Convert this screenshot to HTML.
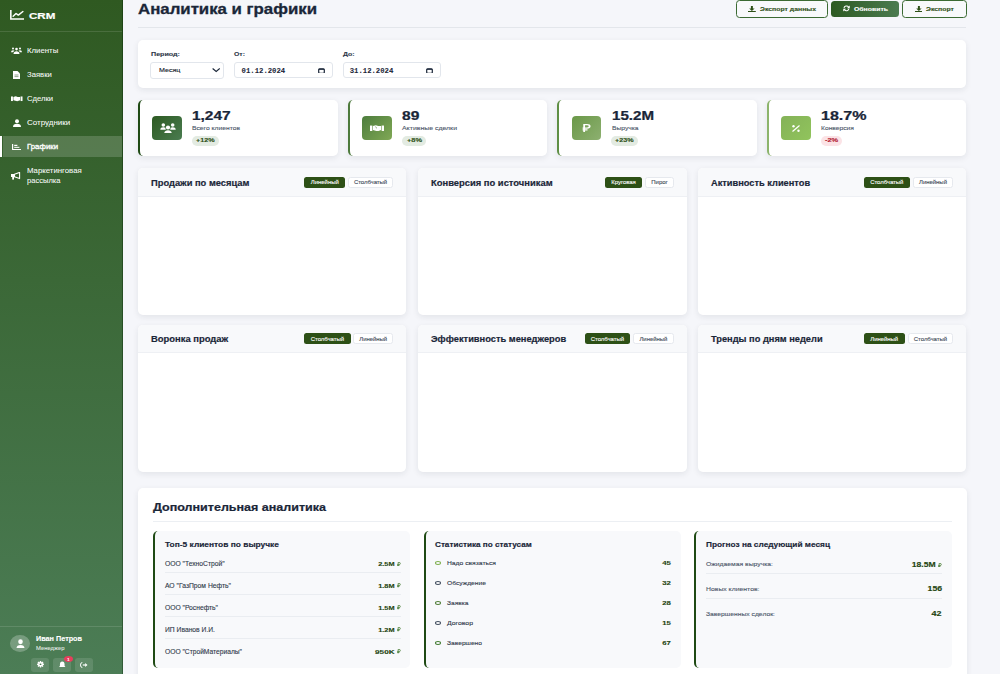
<!DOCTYPE html><html><head><meta charset="utf-8"><title>CRM - Аналитика и графики</title><style>
html,body{margin:0;padding:0;width:1000px;height:674px;overflow:hidden;background:#f5f6fa;}
.t{position:absolute;line-height:1;white-space:nowrap;}
.b{position:absolute;box-sizing:border-box;}
</style></head><body>
<div class="b" style="left:0.00px;top:0.00px;width:123.00px;height:674.00px;background:linear-gradient(180deg,rgb(47,89,33) 0%,rgb(76,125,86) 100%);"></div>
<div class="b" style="left:122.00px;top:0.00px;width:1.00px;height:674.00px;background:rgba(0,30,0,.35);"></div>
<svg class="b" style="left:9.60px;top:10.40px;width:14.60px;height:9.80px;" viewBox="0 0 14 10" preserveAspectRatio="none"><path d="M0.8 0 V9.2 H13.8" fill="none" stroke="#fff" stroke-width="1.5" stroke-linecap="round"/><path d="M3 6.3 L5.8 3.6 L8 5.2 L12.4 1.6" fill="none" stroke="#fff" stroke-width="1.4" stroke-linecap="round" stroke-linejoin="round"/></svg>
<div class="t" id="t0" style="left:28.80px;top:11.09px;font-size:9.70px;font-weight:700;color:#fff;letter-spacing:0.00px;font-family:'Liberation Sans', sans-serif;-webkit-text-stroke:0.19px #fff;transform:scaleX(1.1966);transform-origin:0 0;">CRM</div>
<div class="b" style="left:0.00px;top:31.00px;width:122.00px;height:1.00px;background:rgba(255,255,255,.12);"></div>
<div class="b" style="left:3.00px;top:135.80px;width:119.00px;height:21.70px;background:rgba(255,255,255,.17);"></div>
<div class="b" style="left:0.00px;top:135.80px;width:1.80px;height:21.70px;background:#fff;"></div>
<div class="t" id="t1" style="left:27.10px;top:47.61px;font-size:6.90px;font-weight:400;color:rgba(255,255,255,.95);letter-spacing:0.00px;font-family:'Liberation Sans', sans-serif;-webkit-text-stroke:0.10px rgba(255,255,255,.95);transform:scaleX(1.1306);transform-origin:0 0;">Клиенты</div>
<div class="t" id="t2" style="left:27.10px;top:71.86px;font-size:6.90px;font-weight:400;color:rgba(255,255,255,.95);letter-spacing:0.00px;font-family:'Liberation Sans', sans-serif;-webkit-text-stroke:0.10px rgba(255,255,255,.95);transform:scaleX(1.1146);transform-origin:0 0;">Заявки</div>
<div class="t" id="t3" style="left:27.10px;top:96.16px;font-size:6.90px;font-weight:400;color:rgba(255,255,255,.95);letter-spacing:0.00px;font-family:'Liberation Sans', sans-serif;-webkit-text-stroke:0.10px rgba(255,255,255,.95);transform:scaleX(1.1114);transform-origin:0 0;">Сделки</div>
<div class="t" id="t4" style="left:27.10px;top:120.36px;font-size:6.90px;font-weight:400;color:rgba(255,255,255,.95);letter-spacing:0.00px;font-family:'Liberation Sans', sans-serif;-webkit-text-stroke:0.10px rgba(255,255,255,.95);transform:scaleX(1.1600);transform-origin:0 0;">Сотрудники</div>
<div class="t" id="t5" style="left:27.10px;top:144.36px;font-size:6.90px;font-weight:400;color:#fff;letter-spacing:0.00px;font-family:'Liberation Sans', sans-serif;-webkit-text-stroke:0.30px #fff;transform:scaleX(1.1318);transform-origin:0 0;">Графики</div>
<div class="t" id="t6" style="left:27.10px;top:168.06px;font-size:6.90px;font-weight:400;color:rgba(255,255,255,.95);letter-spacing:0.00px;font-family:'Liberation Sans', sans-serif;-webkit-text-stroke:0.10px rgba(255,255,255,.95);transform:scaleX(1.1315);transform-origin:0 0;">Маркетинговая</div>
<div class="t" id="t7" style="left:27.10px;top:178.06px;font-size:6.90px;font-weight:400;color:rgba(255,255,255,.95);letter-spacing:0.00px;font-family:'Liberation Sans', sans-serif;-webkit-text-stroke:0.10px rgba(255,255,255,.95);transform:scaleX(1.0972);transform-origin:0 0;">рассылка</div>
<svg class="b" style="left:11.00px;top:47.00px;width:11.00px;height:7.20px;" viewBox="0 0 22 14" preserveAspectRatio="none"><circle cx="11" cy="4" r="2.6" fill="#fff"/><circle cx="4" cy="3" r="2" fill="#fff"/><circle cx="18" cy="3" r="2" fill="#fff"/><path d="M5 14 Q5 8.5 11 8.5 Q17 8.5 17 14Z" fill="#fff"/><path d="M0 10 Q0 6.5 4 6.5 Q6 6.5 7 7.5 Q4.5 9 4.3 10Z" fill="#fff"/><path d="M22 10 Q22 6.5 18 6.5 Q16 6.5 15 7.5 Q17.5 9 17.7 10Z" fill="#fff"/></svg>
<svg class="b" style="left:12.50px;top:71.00px;width:7.00px;height:8.00px;" viewBox="0 0 7 8" preserveAspectRatio="none"><path d="M0 0 H4.5 L7 2.5 V8 H0Z" fill="#fff"/><path d="M1.5 4 H5.5 M1.5 5.6 H5.5" stroke="#4a6a40" stroke-width=".6"/></svg>
<svg class="b" style="left:11.00px;top:96.00px;width:11.50px;height:5.50px;" viewBox="0 0 12 6" preserveAspectRatio="none"><rect x="0" y="0.5" width="2" height="5" fill="#fff"/><rect x="10" y="0.5" width="2" height="5" fill="#fff"/><path d="M2.5 1 L5 0.3 L7 1 L9.5 1 V4.5 L6.5 5.8 L2.5 4.5Z" fill="#fff"/></svg>
<svg class="b" style="left:12.50px;top:119.00px;width:8.00px;height:8.00px;" viewBox="0 0 8 8" preserveAspectRatio="none"><circle cx="4" cy="2.2" r="2" fill="#fff"/><path d="M0 8 Q0 4.8 4 4.8 Q8 4.8 8 8Z" fill="#fff"/></svg>
<svg class="b" style="left:11.60px;top:143.80px;width:9.30px;height:6.20px;" viewBox="0 0 9.3 6.2" preserveAspectRatio="none"><path d="M0.6 0 V5.5 Q0.6 5.6 0.8 5.6 H9.3" fill="none" stroke="#fff" stroke-width="1.2"/><rect x="2.2" y="0.8" width="3.2" height="1.2" fill="#fff"/><rect x="2.2" y="2.8" width="5.2" height="1.2" fill="#fff" opacity=".85"/></svg>
<svg class="b" style="left:11.40px;top:172.20px;width:9.30px;height:7.60px;" viewBox="0 0 9.3 7.6" preserveAspectRatio="none"><rect x="0" y="2" width="3.4" height="3" fill="#fff"/><rect x="1.2" y="4.6" width="1.8" height="3" fill="#fff"/><path d="M3.4 2.2 L8.6 0.4 V6.6 L3.4 4.8Z" fill="none" stroke="#fff" stroke-width="1.1" stroke-linejoin="round"/></svg>
<div class="b" style="left:0.00px;top:626.00px;width:122.00px;height:1.00px;background:rgba(255,255,255,.12);"></div>
<div class="b" style="left:10.00px;top:635.00px;width:20.00px;height:16.50px;border-radius:50%;background:rgba(255,255,255,.25);"></div>
<svg class="b" style="left:15.50px;top:638.50px;width:9.00px;height:9.50px;" viewBox="0 0 9 9" preserveAspectRatio="none"><circle cx="4.5" cy="2.6" r="2.3" fill="#fff"/><path d="M0.5 9 Q0.5 5.6 4.5 5.6 Q8.5 5.6 8.5 9Z" fill="#fff"/></svg>
<div class="t" id="t8" style="left:35.50px;top:635.60px;font-size:6.50px;font-weight:700;color:#fff;letter-spacing:0.00px;font-family:'Liberation Sans', sans-serif;-webkit-text-stroke:0.13px #fff;transform:scaleX(1.1147);transform-origin:0 0;">Иван Петров</div>
<div class="t" id="t9" style="left:35.50px;top:645.88px;font-size:5.10px;font-weight:400;color:rgba(255,255,255,.8);letter-spacing:0.00px;font-family:'Liberation Sans', sans-serif;-webkit-text-stroke:0.10px rgba(255,255,255,.8);transform:scaleX(1.1530);transform-origin:0 0;">Менеджер</div>
<div class="b" style="left:31.00px;top:658.00px;width:17.50px;height:13.50px;border-radius:3px;background:rgba(255,255,255,.12);"></div>
<div class="b" style="left:53.00px;top:658.00px;width:17.50px;height:13.50px;border-radius:3px;background:rgba(255,255,255,.12);"></div>
<div class="b" style="left:75.00px;top:658.00px;width:17.50px;height:13.50px;border-radius:3px;background:rgba(255,255,255,.12);"></div>
<svg class="b" style="left:36.60px;top:661.30px;width:7.00px;height:6.50px;" viewBox="0 0 12 12" preserveAspectRatio="none"><g fill="#fff"><circle cx="6" cy="6" r="4.2"/><rect x="4.8" y="0" width="2.4" height="12"/><rect x="0" y="4.8" width="12" height="2.4"/><rect x="4.8" y="0" width="2.4" height="12" transform="rotate(45 6 6)"/><rect x="4.8" y="0" width="2.4" height="12" transform="rotate(-45 6 6)"/></g><circle cx="6" cy="6" r="1.6" fill="#4f7d55"/></svg>
<svg class="b" style="left:59.00px;top:661.00px;width:6.50px;height:7.00px;" viewBox="0 0 7 7" preserveAspectRatio="none"><path d="M3.5 0.5 Q6 0.5 6 3.5 V5 L7 6 H0 L1 5 V3.5 Q1 0.5 3.5 0.5Z" fill="#fff"/></svg>
<div class="b" style="left:64.00px;top:656.00px;width:9.00px;height:6.00px;border-radius:50%;background:#e63e5c;"></div>
<div class="t" id="t10" style="left:67.30px;top:657.61px;font-size:4.00px;font-weight:700;color:#fff;letter-spacing:0.00px;font-family:'Liberation Sans', sans-serif;-webkit-text-stroke:0.08px #fff;">1</div>
<svg class="b" style="left:80.00px;top:661.50px;width:7.50px;height:6.00px;" viewBox="0 0 8 6" preserveAspectRatio="none"><path d="M2.5 0.5 Q0.5 0.5 0.5 3 Q0.5 5.5 2.5 5.5" fill="none" stroke="#fff" stroke-width="1"/><path d="M3 3 H6" stroke="#fff" stroke-width="1.2"/><path d="M5.5 1 L8 3 L5.5 5Z" fill="#fff"/></svg>
<div class="t" id="t11" style="left:138.20px;top:2.92px;font-size:13.80px;font-weight:700;color:#1a2638;letter-spacing:0.00px;font-family:'Liberation Sans', sans-serif;-webkit-text-stroke:0.28px #1a2638;transform:scaleX(1.2178);transform-origin:0 0;">Аналитика и графики</div>
<div class="b" style="left:735.80px;top:0.30px;width:92.60px;height:17.30px;border:1.3px solid #3b6a33;border-radius:3.5px;background:#f8f9fb;"></div>
<div class="b" style="left:830.80px;top:1.10px;width:68.70px;height:15.80px;border-radius:3.5px;background:linear-gradient(90deg,#2d5a22,#4b7b50);"></div>
<div class="b" style="left:901.70px;top:0.30px;width:65.30px;height:17.30px;border:1.3px solid #3b6a33;border-radius:3.5px;background:#f8f9fb;"></div>
<svg class="b" style="left:748.00px;top:5.80px;width:7.80px;height:6.40px;" viewBox="0 0 8 6.4" preserveAspectRatio="none"><path d="M3 0 H5 V2.5 H6.8 L4 5 L1.2 2.5 H3Z" fill="#2d5016"/><rect x="0" y="5" width="8" height="1.4" fill="#2d5016"/></svg>
<div class="t" id="t12" style="left:760.10px;top:6.04px;font-size:6.10px;font-weight:700;color:#2d5016;letter-spacing:0.00px;font-family:'Liberation Sans', sans-serif;-webkit-text-stroke:0.12px #2d5016;transform:scaleX(1.1281);transform-origin:0 0;">Экспорт данных</div>
<svg class="b" style="left:842.60px;top:5.20px;width:7.00px;height:6.80px;" viewBox="0 0 10 10" preserveAspectRatio="none"><path d="M1.4 4.6 A3.7 3.7 0 0 1 8.0 3.0" fill="none" stroke="#fff" stroke-width="1.5"/><path d="M9.6 0.6 V4.6 H5.6Z" fill="#fff"/><path d="M8.6 5.4 A3.7 3.7 0 0 1 2.0 7.0" fill="none" stroke="#fff" stroke-width="1.5"/><path d="M0.4 9.4 V5.4 H4.4Z" fill="#fff"/></svg>
<div class="t" id="t13" style="left:854.30px;top:5.94px;font-size:6.10px;font-weight:700;color:#fff;letter-spacing:0.00px;font-family:'Liberation Sans', sans-serif;-webkit-text-stroke:0.12px #fff;transform:scaleX(1.1280);transform-origin:0 0;">Обновить</div>
<svg class="b" style="left:914.50px;top:5.80px;width:7.80px;height:6.40px;" viewBox="0 0 8 6.4" preserveAspectRatio="none"><path d="M3 0 H5 V2.5 H6.8 L4 5 L1.2 2.5 H3Z" fill="#2d5016"/><rect x="0" y="5" width="8" height="1.4" fill="#2d5016"/></svg>
<div class="t" id="t14" style="left:926.30px;top:6.04px;font-size:6.10px;font-weight:700;color:#2d5016;letter-spacing:0.00px;font-family:'Liberation Sans', sans-serif;-webkit-text-stroke:0.12px #2d5016;transform:scaleX(1.1320);transform-origin:0 0;">Экспорт</div>
<div class="b" style="left:138.00px;top:27.00px;width:828.00px;height:1.00px;background:#e3e6eb;"></div>
<div class="b" style="left:138.00px;top:39.80px;width:828.40px;height:48.60px;background:#fff;border-radius:5px;box-shadow:0 2px 6px rgba(20,30,50,.085);"></div>
<div class="t" id="t15" style="left:150.60px;top:51.44px;font-size:6.10px;font-weight:700;color:#2d3748;letter-spacing:0.00px;font-family:'Liberation Sans', sans-serif;-webkit-text-stroke:0.12px #2d3748;transform:scaleX(1.1702);transform-origin:0 0;">Период:</div>
<div class="t" id="t16" style="left:234.20px;top:51.44px;font-size:6.10px;font-weight:700;color:#2d3748;letter-spacing:0.00px;font-family:'Liberation Sans', sans-serif;-webkit-text-stroke:0.12px #2d3748;transform:scaleX(1.1264);transform-origin:0 0;">От:</div>
<div class="t" id="t17" style="left:343.00px;top:51.44px;font-size:6.10px;font-weight:700;color:#2d3748;letter-spacing:0.00px;font-family:'Liberation Sans', sans-serif;-webkit-text-stroke:0.12px #2d3748;transform:scaleX(1.1306);transform-origin:0 0;">До:</div>
<div class="b" style="left:150.40px;top:62.00px;width:73.40px;height:16.50px;border:1px solid #e2e6ec;border-radius:3px;background:#fff;"></div>
<div class="t" id="t18" style="left:159.00px;top:67.32px;font-size:6.00px;font-weight:400;color:#111a28;letter-spacing:0.00px;font-family:'Liberation Sans', sans-serif;-webkit-text-stroke:0.12px #111a28;transform:scaleX(1.1827);transform-origin:0 0;">Месяц</div>
<svg class="b" style="left:211.80px;top:68.40px;width:8.40px;height:4.20px;" viewBox="0 0 8 4" preserveAspectRatio="none"><path d="M0.6 0.5 L4 3.4 L7.4 0.5" fill="none" stroke="#1a2638" stroke-width="1.1"/></svg>
<div class="b" style="left:234.20px;top:62.30px;width:98.40px;height:15.70px;border:1px solid #e2e6ec;border-radius:3px;background:#fff;"></div>
<div class="t" id="t19" style="left:241.60px;top:67.62px;font-size:7.28px;font-weight:700;color:#1a2638;letter-spacing:0.00px;font-family:'Liberation Mono', monospace;-webkit-text-stroke:0.05px #1a2638;">01.12.2024</div>
<svg class="b" style="left:318.00px;top:67.60px;width:7.00px;height:5.80px;" viewBox="0 0 7 6" preserveAspectRatio="none"><rect x="0.7" y="0.8" width="5.6" height="4.6" rx="1" fill="none" stroke="#1a2638" stroke-width="1.2"/><rect x="0.7" y="0.8" width="5.6" height="1.1" fill="#1a2638"/></svg>
<div class="b" style="left:343.00px;top:62.30px;width:97.70px;height:15.70px;border:1px solid #e2e6ec;border-radius:3px;background:#fff;"></div>
<div class="t" id="t20" style="left:349.70px;top:67.62px;font-size:7.28px;font-weight:700;color:#1a2638;letter-spacing:0.00px;font-family:'Liberation Mono', monospace;-webkit-text-stroke:0.05px #1a2638;">31.12.2024</div>
<svg class="b" style="left:426.10px;top:67.60px;width:7.00px;height:5.80px;" viewBox="0 0 7 6" preserveAspectRatio="none"><rect x="0.7" y="0.8" width="5.6" height="4.6" rx="1" fill="none" stroke="#1a2638" stroke-width="1.2"/><rect x="0.7" y="0.8" width="5.6" height="1.1" fill="#1a2638"/></svg>
<div class="b" style="left:138.00px;top:100.00px;width:199.50px;height:56.40px;background:#fff;border-radius:5px;border-left:2px solid #1f4a14;box-shadow:0 2px 6px rgba(20,30,50,.085);"></div>
<div class="b" style="left:152.40px;top:116.00px;width:29.40px;height:24.00px;border-radius:4px;background:linear-gradient(135deg,#2d5a22,#4a7c50);"></div>
<svg class="b" style="left:159.50px;top:122.50px;width:16.00px;height:10.90px;" viewBox="0 0 16 11" preserveAspectRatio="none"><g fill="#fff"><circle cx="3.3" cy="2" r="1.8"/><circle cx="12.7" cy="2" r="1.8"/><circle cx="8" cy="4.5" r="2.1"/><path d="M0.3 6.7 Q0.5 4.3 3.3 4.3 Q4.9 4.3 5.5 5.1 Q5.3 6 5.8 6.7Z"/><path d="M15.7 6.7 Q15.5 4.3 12.7 4.3 Q11.1 4.3 10.5 5.1 Q10.7 6 10.2 6.7Z"/><path d="M4.1 10.8 Q4.5 7.3 8 7.3 Q11.5 7.3 11.9 10.8Z"/></g></svg>
<div class="t" id="t21" style="left:192.40px;top:110.07px;font-size:12.20px;font-weight:700;color:#1a2638;letter-spacing:0.00px;font-family:'Liberation Sans', sans-serif;-webkit-text-stroke:0.24px #1a2638;transform:scaleX(1.2656);transform-origin:0 0;">1,247</div>
<div class="t" id="t22" style="left:192.40px;top:124.94px;font-size:6.10px;font-weight:400;color:#4a5568;letter-spacing:0.00px;font-family:'Liberation Sans', sans-serif;-webkit-text-stroke:0.10px #4a5568;transform:scaleX(1.1042);transform-origin:0 0;">Всего клиентов</div>
<div class="b" style="left:192.00px;top:135.80px;width:27.00px;height:10.20px;border-radius:5px;background:#e3ebe2;"></div>
<div class="t" id="t23" style="left:196.20px;top:138.46px;font-size:5.60px;font-weight:700;color:#2d5016;letter-spacing:0.00px;font-family:'Liberation Sans', sans-serif;-webkit-text-stroke:0.11px #2d5016;transform:scaleX(1.2855);transform-origin:0 0;">+12%</div>
<div class="b" style="left:348.00px;top:100.00px;width:198.70px;height:56.40px;background:#fff;border-radius:5px;border-left:2px solid #4d7a3c;box-shadow:0 2px 6px rgba(20,30,50,.085);"></div>
<div class="b" style="left:362.40px;top:116.00px;width:29.40px;height:24.00px;border-radius:4px;background:linear-gradient(135deg,#4d7d3d,#80a855);"></div>
<svg class="b" style="left:370.10px;top:124.70px;width:14.00px;height:6.60px;" viewBox="0 0 12 6" preserveAspectRatio="none"><rect x="0" y="0.5" width="2" height="5" fill="#fff"/><rect x="10" y="0.5" width="2" height="5" fill="#fff"/><path d="M2.5 1 L5 0.3 L7 1 L9.5 1 V4.5 L6.5 5.8 L2.5 4.5Z" fill="#fff"/><path d="M4.5 1.5 L6 3" stroke="#5a8a48" stroke-width=".6"/></svg>
<div class="t" id="t24" style="left:402.40px;top:110.07px;font-size:12.20px;font-weight:700;color:#1a2638;letter-spacing:0.00px;font-family:'Liberation Sans', sans-serif;-webkit-text-stroke:0.24px #1a2638;transform:scaleX(1.2756);transform-origin:0 0;">89</div>
<div class="t" id="t25" style="left:402.40px;top:124.94px;font-size:6.10px;font-weight:400;color:#4a5568;letter-spacing:0.00px;font-family:'Liberation Sans', sans-serif;-webkit-text-stroke:0.10px #4a5568;transform:scaleX(1.1344);transform-origin:0 0;">Активные сделки</div>
<div class="b" style="left:402.00px;top:135.80px;width:24.00px;height:10.20px;border-radius:5px;background:#e3ebe2;"></div>
<div class="t" id="t26" style="left:406.50px;top:138.46px;font-size:5.60px;font-weight:700;color:#2d5016;letter-spacing:0.00px;font-family:'Liberation Sans', sans-serif;-webkit-text-stroke:0.11px #2d5016;transform:scaleX(1.3205);transform-origin:0 0;">+8%</div>
<div class="b" style="left:557.20px;top:100.00px;width:199.50px;height:56.40px;background:#fff;border-radius:5px;border-left:2px solid #5f8f45;box-shadow:0 2px 6px rgba(20,30,50,.085);"></div>
<div class="b" style="left:571.60px;top:116.00px;width:29.40px;height:24.00px;border-radius:4px;background:linear-gradient(135deg,#6a9848,#8db070);"></div>
<svg class="b" style="left:582.30px;top:124.00px;width:8.40px;height:7.90px;" viewBox="0 0 7 10" preserveAspectRatio="none"><path d="M1.8 10 V0.8 H4.2 Q6.4 0.8 6.4 3 Q6.4 5.2 4.2 5.2 H0.5 M0.5 7.4 H4.6" fill="none" stroke="#fff" stroke-width="1.5"/></svg>
<div class="t" id="t27" style="left:611.60px;top:110.07px;font-size:12.20px;font-weight:700;color:#1a2638;letter-spacing:0.00px;font-family:'Liberation Sans', sans-serif;-webkit-text-stroke:0.24px #1a2638;transform:scaleX(1.2399);transform-origin:0 0;">15.2M</div>
<div class="t" id="t28" style="left:611.60px;top:124.94px;font-size:6.10px;font-weight:400;color:#4a5568;letter-spacing:0.00px;font-family:'Liberation Sans', sans-serif;-webkit-text-stroke:0.10px #4a5568;transform:scaleX(1.0956);transform-origin:0 0;">Выручка</div>
<div class="b" style="left:611.20px;top:135.80px;width:27.00px;height:10.20px;border-radius:5px;background:#e3ebe2;"></div>
<div class="t" id="t29" style="left:615.45px;top:138.46px;font-size:5.60px;font-weight:700;color:#2d5016;letter-spacing:0.00px;font-family:'Liberation Sans', sans-serif;-webkit-text-stroke:0.11px #2d5016;transform:scaleX(1.2786);transform-origin:0 0;">+23%</div>
<div class="b" style="left:766.80px;top:100.00px;width:199.40px;height:56.40px;background:#fff;border-radius:5px;border-left:2px solid #8cb46c;box-shadow:0 2px 6px rgba(20,30,50,.085);"></div>
<div class="b" style="left:781.20px;top:116.00px;width:29.40px;height:24.00px;border-radius:4px;background:linear-gradient(135deg,#84b258,#91c45c);"></div>
<svg class="b" style="left:791.90px;top:124.50px;width:8.00px;height:7.00px;" viewBox="0 0 8 7" preserveAspectRatio="none"><path d="M0.5 6.5 L7.5 0.5" stroke="#fff" stroke-width="1.2"/><circle cx="1.5" cy="1.3" r="1.2" fill="#fff"/><circle cx="6.5" cy="5.7" r="1.2" fill="#fff"/></svg>
<div class="t" id="t30" style="left:821.20px;top:110.07px;font-size:12.20px;font-weight:700;color:#1a2638;letter-spacing:0.00px;font-family:'Liberation Sans', sans-serif;-webkit-text-stroke:0.24px #1a2638;transform:scaleX(1.3165);transform-origin:0 0;">18.7%</div>
<div class="t" id="t31" style="left:821.20px;top:124.94px;font-size:6.10px;font-weight:400;color:#4a5568;letter-spacing:0.00px;font-family:'Liberation Sans', sans-serif;-webkit-text-stroke:0.10px #4a5568;transform:scaleX(1.0994);transform-origin:0 0;">Конверсия</div>
<div class="b" style="left:820.80px;top:135.80px;width:21.20px;height:10.20px;border-radius:5px;background:#fbe3e6;"></div>
<div class="t" id="t32" style="left:824.80px;top:138.46px;font-size:5.60px;font-weight:700;color:#b42335;letter-spacing:0.00px;font-family:'Liberation Sans', sans-serif;-webkit-text-stroke:0.11px #b42335;transform:scaleX(1.3262);transform-origin:0 0;">-2%</div>
<div class="b" style="left:138.00px;top:168.40px;width:268.00px;height:146.60px;background:#fff;border-radius:5px;overflow:hidden;box-shadow:0 2px 6px rgba(20,30,50,.085);"></div>
<div class="b" style="left:138.00px;top:168.40px;width:268.00px;height:28.20px;background:#f8f9fb;border-radius:5px 5px 0 0;border-bottom:1px solid #eef0f4;"></div>
<div class="t" id="t33" style="left:150.60px;top:178.53px;font-size:8.70px;font-weight:700;color:#1a2638;letter-spacing:0.00px;font-family:'Liberation Sans', sans-serif;-webkit-text-stroke:0.17px #1a2638;transform:scaleX(1.0727);transform-origin:0 0;">Продажи по месяцам</div>
<div class="b" style="left:348.00px;top:176.60px;width:45.00px;height:11.00px;border-radius:2.5px;background:#fff;border:0.8px solid #e6e9ee;"></div>
<div class="t" id="t34" style="left:370.50px;top:179.32px;font-size:6.00px;font-weight:400;color:#404a58;letter-spacing:-0.05px;font-family:'Liberation Sans', sans-serif;-webkit-text-stroke:0.10px #404a58;transform:translateX(-50%);">Столбчатый</div>
<div class="b" style="left:304.40px;top:176.60px;width:40.80px;height:11.00px;border-radius:2.5px;background:#2d5016;"></div>
<div class="t" id="t35" style="left:324.80px;top:179.32px;font-size:6.00px;font-weight:400;color:#fff;letter-spacing:-0.05px;font-family:'Liberation Sans', sans-serif;-webkit-text-stroke:0.10px #fff;transform:translateX(-50%);">Линейный</div>
<div class="b" style="left:418.00px;top:168.40px;width:268.80px;height:146.60px;background:#fff;border-radius:5px;overflow:hidden;box-shadow:0 2px 6px rgba(20,30,50,.085);"></div>
<div class="b" style="left:418.00px;top:168.40px;width:268.80px;height:28.20px;background:#f8f9fb;border-radius:5px 5px 0 0;border-bottom:1px solid #eef0f4;"></div>
<div class="t" id="t36" style="left:430.60px;top:178.53px;font-size:8.70px;font-weight:700;color:#1a2638;letter-spacing:0.00px;font-family:'Liberation Sans', sans-serif;-webkit-text-stroke:0.17px #1a2638;transform:scaleX(1.0810);transform-origin:0 0;">Конверсия по источникам</div>
<div class="b" style="left:645.20px;top:176.60px;width:28.60px;height:11.00px;border-radius:2.5px;background:#fff;border:0.8px solid #e6e9ee;"></div>
<div class="t" id="t37" style="left:659.50px;top:179.32px;font-size:6.00px;font-weight:400;color:#404a58;letter-spacing:-0.05px;font-family:'Liberation Sans', sans-serif;-webkit-text-stroke:0.10px #404a58;transform:translateX(-50%);">Пирог</div>
<div class="b" style="left:604.80px;top:176.60px;width:37.60px;height:11.00px;border-radius:2.5px;background:#2d5016;"></div>
<div class="t" id="t38" style="left:623.60px;top:179.32px;font-size:6.00px;font-weight:400;color:#fff;letter-spacing:-0.05px;font-family:'Liberation Sans', sans-serif;-webkit-text-stroke:0.10px #fff;transform:translateX(-50%);">Круговая</div>
<div class="b" style="left:698.40px;top:168.40px;width:267.90px;height:146.60px;background:#fff;border-radius:5px;overflow:hidden;box-shadow:0 2px 6px rgba(20,30,50,.085);"></div>
<div class="b" style="left:698.40px;top:168.40px;width:267.90px;height:28.20px;background:#f8f9fb;border-radius:5px 5px 0 0;border-bottom:1px solid #eef0f4;"></div>
<div class="t" id="t39" style="left:711.00px;top:178.53px;font-size:8.70px;font-weight:700;color:#1a2638;letter-spacing:0.00px;font-family:'Liberation Sans', sans-serif;-webkit-text-stroke:0.17px #1a2638;transform:scaleX(1.0652);transform-origin:0 0;">Активность клиентов</div>
<div class="b" style="left:912.70px;top:176.60px;width:40.60px;height:11.00px;border-radius:2.5px;background:#fff;border:0.8px solid #e6e9ee;"></div>
<div class="t" id="t40" style="left:933.00px;top:179.32px;font-size:6.00px;font-weight:400;color:#404a58;letter-spacing:-0.05px;font-family:'Liberation Sans', sans-serif;-webkit-text-stroke:0.10px #404a58;transform:translateX(-50%);">Линейный</div>
<div class="b" style="left:863.60px;top:176.60px;width:46.30px;height:11.00px;border-radius:2.5px;background:#2d5016;"></div>
<div class="t" id="t41" style="left:886.75px;top:179.32px;font-size:6.00px;font-weight:400;color:#fff;letter-spacing:-0.05px;font-family:'Liberation Sans', sans-serif;-webkit-text-stroke:0.10px #fff;transform:translateX(-50%);">Столбчатый</div>
<div class="b" style="left:138.00px;top:324.60px;width:268.00px;height:147.00px;background:#fff;border-radius:5px;overflow:hidden;box-shadow:0 2px 6px rgba(20,30,50,.085);"></div>
<div class="b" style="left:138.00px;top:324.60px;width:268.00px;height:28.20px;background:#f8f9fb;border-radius:5px 5px 0 0;border-bottom:1px solid #eef0f4;"></div>
<div class="t" id="t42" style="left:150.60px;top:334.73px;font-size:8.70px;font-weight:700;color:#1a2638;letter-spacing:0.00px;font-family:'Liberation Sans', sans-serif;-webkit-text-stroke:0.17px #1a2638;transform:scaleX(1.0828);transform-origin:0 0;">Воронка продаж</div>
<div class="b" style="left:353.40px;top:332.80px;width:39.60px;height:11.00px;border-radius:2.5px;background:#fff;border:0.8px solid #e6e9ee;"></div>
<div class="t" id="t43" style="left:373.20px;top:335.52px;font-size:6.00px;font-weight:400;color:#404a58;letter-spacing:-0.05px;font-family:'Liberation Sans', sans-serif;-webkit-text-stroke:0.10px #404a58;transform:translateX(-50%);">Линейный</div>
<div class="b" style="left:304.20px;top:332.80px;width:46.40px;height:11.00px;border-radius:2.5px;background:#2d5016;"></div>
<div class="t" id="t44" style="left:327.40px;top:335.52px;font-size:6.00px;font-weight:400;color:#fff;letter-spacing:-0.05px;font-family:'Liberation Sans', sans-serif;-webkit-text-stroke:0.10px #fff;transform:translateX(-50%);">Столбчатый</div>
<div class="b" style="left:418.00px;top:324.60px;width:268.80px;height:147.00px;background:#fff;border-radius:5px;overflow:hidden;box-shadow:0 2px 6px rgba(20,30,50,.085);"></div>
<div class="b" style="left:418.00px;top:324.60px;width:268.80px;height:28.20px;background:#f8f9fb;border-radius:5px 5px 0 0;border-bottom:1px solid #eef0f4;"></div>
<div class="t" id="t45" style="left:430.60px;top:334.73px;font-size:8.70px;font-weight:700;color:#1a2638;letter-spacing:0.00px;font-family:'Liberation Sans', sans-serif;-webkit-text-stroke:0.17px #1a2638;transform:scaleX(1.0700);transform-origin:0 0;">Эффективность менеджеров</div>
<div class="b" style="left:633.00px;top:332.80px;width:40.80px;height:11.00px;border-radius:2.5px;background:#fff;border:0.8px solid #e6e9ee;"></div>
<div class="t" id="t46" style="left:653.40px;top:335.52px;font-size:6.00px;font-weight:400;color:#404a58;letter-spacing:-0.05px;font-family:'Liberation Sans', sans-serif;-webkit-text-stroke:0.10px #404a58;transform:translateX(-50%);">Линейный</div>
<div class="b" style="left:584.60px;top:332.80px;width:45.60px;height:11.00px;border-radius:2.5px;background:#2d5016;"></div>
<div class="t" id="t47" style="left:607.40px;top:335.52px;font-size:6.00px;font-weight:400;color:#fff;letter-spacing:-0.05px;font-family:'Liberation Sans', sans-serif;-webkit-text-stroke:0.10px #fff;transform:translateX(-50%);">Столбчатый</div>
<div class="b" style="left:698.40px;top:324.60px;width:267.90px;height:147.00px;background:#fff;border-radius:5px;overflow:hidden;box-shadow:0 2px 6px rgba(20,30,50,.085);"></div>
<div class="b" style="left:698.40px;top:324.60px;width:267.90px;height:28.20px;background:#f8f9fb;border-radius:5px 5px 0 0;border-bottom:1px solid #eef0f4;"></div>
<div class="t" id="t48" style="left:711.00px;top:334.73px;font-size:8.70px;font-weight:700;color:#1a2638;letter-spacing:0.00px;font-family:'Liberation Sans', sans-serif;-webkit-text-stroke:0.17px #1a2638;transform:scaleX(1.0665);transform-origin:0 0;">Тренды по дням недели</div>
<div class="b" style="left:907.60px;top:332.80px;width:45.70px;height:11.00px;border-radius:2.5px;background:#fff;border:0.8px solid #e6e9ee;"></div>
<div class="t" id="t49" style="left:930.45px;top:335.52px;font-size:6.00px;font-weight:400;color:#404a58;letter-spacing:-0.05px;font-family:'Liberation Sans', sans-serif;-webkit-text-stroke:0.10px #404a58;transform:translateX(-50%);">Столбчатый</div>
<div class="b" style="left:863.60px;top:332.80px;width:41.20px;height:11.00px;border-radius:2.5px;background:#2d5016;"></div>
<div class="t" id="t50" style="left:884.20px;top:335.52px;font-size:6.00px;font-weight:400;color:#fff;letter-spacing:-0.05px;font-family:'Liberation Sans', sans-serif;-webkit-text-stroke:0.10px #fff;transform:translateX(-50%);">Линейный</div>
<div class="b" style="left:138.00px;top:487.80px;width:828.60px;height:212.20px;background:#fff;border-radius:5px;box-shadow:0 2px 6px rgba(20,30,50,.085);"></div>
<div class="t" id="t51" style="left:152.70px;top:501.91px;font-size:10.50px;font-weight:700;color:#1a2638;letter-spacing:0.00px;font-family:'Liberation Sans', sans-serif;-webkit-text-stroke:0.21px #1a2638;transform:scaleX(1.1918);transform-origin:0 0;">Дополнительная аналитика</div>
<div class="b" style="left:152.70px;top:520.50px;width:798.90px;height:1.00px;background:#eceff3;"></div>
<div class="b" style="left:152.70px;top:531.40px;width:257.70px;height:136.20px;background:#f8f9fb;border-radius:5px;border-left:2px solid #1f4a14;"></div>
<div class="b" style="left:423.50px;top:531.40px;width:257.30px;height:136.20px;background:#f8f9fb;border-radius:5px;border-left:2px solid #1f4a14;"></div>
<div class="b" style="left:694.40px;top:531.40px;width:257.20px;height:136.20px;background:#f8f9fb;border-radius:5px;border-left:2px solid #1f4a14;"></div>
<div class="t" id="t52" style="left:164.60px;top:541.02px;font-size:7.30px;font-weight:700;color:#1a2638;letter-spacing:0.00px;font-family:'Liberation Sans', sans-serif;-webkit-text-stroke:0.15px #1a2638;transform:scaleX(1.1499);transform-origin:0 0;">Топ-5 клиентов по выручке</div>
<div class="t" id="t53" style="left:435.00px;top:541.02px;font-size:7.30px;font-weight:700;color:#1a2638;letter-spacing:0.00px;font-family:'Liberation Sans', sans-serif;-webkit-text-stroke:0.15px #1a2638;transform:scaleX(1.1161);transform-origin:0 0;">Статистика по статусам</div>
<div class="t" id="t54" style="left:705.60px;top:541.12px;font-size:7.30px;font-weight:700;color:#1a2638;letter-spacing:0.00px;font-family:'Liberation Sans', sans-serif;-webkit-text-stroke:0.15px #1a2638;transform:scaleX(1.1365);transform-origin:0 0;">Прогноз на следующий месяц</div>
<div class="t" id="t55" style="left:164.60px;top:560.98px;font-size:6.40px;font-weight:400;color:#2d3748;letter-spacing:0.00px;font-family:'Liberation Sans', sans-serif;-webkit-text-stroke:0.10px #2d3748;transform:scaleX(1.0514);transform-origin:0 0;">ООО "ТехноСтрой"</div>
<div class="t" id="t56" style="right:605.00px;top:561.04px;font-size:6.10px;font-weight:700;color:#1f4510;letter-spacing:0.00px;font-family:'Liberation Sans', sans-serif;margin-right:0.00px;-webkit-text-stroke:0.12px #1f4510;transform:scaleX(1.2092);transform-origin:100% 0;">2.5M</div>
<svg class="b" style="left:397.30px;top:561.50px;width:3.60px;height:4.40px;" viewBox="0 0 6 7" preserveAspectRatio="none"><path d="M1.9 7 V0.7 H3.7 Q5.5 0.7 5.5 2.4 Q5.5 4.1 3.7 4.1 H0.3 M0.3 5.6 H4" fill="none" stroke="#5a8a48" stroke-width="1.5"/></svg>
<div class="b" style="left:164.60px;top:572.20px;width:236.30px;height:1.00px;background:#eaedf1;"></div>
<div class="t" id="t57" style="left:164.60px;top:582.78px;font-size:6.40px;font-weight:400;color:#2d3748;letter-spacing:0.00px;font-family:'Liberation Sans', sans-serif;-webkit-text-stroke:0.10px #2d3748;transform:scaleX(1.0586);transform-origin:0 0;">АО "ГазПром Нефть"</div>
<div class="t" id="t58" style="right:605.00px;top:582.84px;font-size:6.10px;font-weight:700;color:#1f4510;letter-spacing:0.00px;font-family:'Liberation Sans', sans-serif;margin-right:0.00px;-webkit-text-stroke:0.12px #1f4510;transform:scaleX(1.2092);transform-origin:100% 0;">1.8M</div>
<svg class="b" style="left:397.30px;top:583.30px;width:3.60px;height:4.40px;" viewBox="0 0 6 7" preserveAspectRatio="none"><path d="M1.9 7 V0.7 H3.7 Q5.5 0.7 5.5 2.4 Q5.5 4.1 3.7 4.1 H0.3 M0.3 5.6 H4" fill="none" stroke="#5a8a48" stroke-width="1.5"/></svg>
<div class="b" style="left:164.60px;top:594.00px;width:236.30px;height:1.00px;background:#eaedf1;"></div>
<div class="t" id="t59" style="left:164.60px;top:604.88px;font-size:6.40px;font-weight:400;color:#2d3748;letter-spacing:0.00px;font-family:'Liberation Sans', sans-serif;-webkit-text-stroke:0.10px #2d3748;transform:scaleX(1.0511);transform-origin:0 0;">ООО "Роснефть"</div>
<div class="t" id="t60" style="right:605.00px;top:604.94px;font-size:6.10px;font-weight:700;color:#1f4510;letter-spacing:0.00px;font-family:'Liberation Sans', sans-serif;margin-right:0.00px;-webkit-text-stroke:0.12px #1f4510;transform:scaleX(1.2092);transform-origin:100% 0;">1.5M</div>
<svg class="b" style="left:397.30px;top:605.40px;width:3.60px;height:4.40px;" viewBox="0 0 6 7" preserveAspectRatio="none"><path d="M1.9 7 V0.7 H3.7 Q5.5 0.7 5.5 2.4 Q5.5 4.1 3.7 4.1 H0.3 M0.3 5.6 H4" fill="none" stroke="#5a8a48" stroke-width="1.5"/></svg>
<div class="b" style="left:164.60px;top:616.10px;width:236.30px;height:1.00px;background:#eaedf1;"></div>
<div class="t" id="t61" style="left:164.60px;top:626.78px;font-size:6.40px;font-weight:400;color:#2d3748;letter-spacing:0.00px;font-family:'Liberation Sans', sans-serif;-webkit-text-stroke:0.10px #2d3748;transform:scaleX(1.0540);transform-origin:0 0;">ИП Иванов И.И.</div>
<div class="t" id="t62" style="right:605.00px;top:626.84px;font-size:6.10px;font-weight:700;color:#1f4510;letter-spacing:0.00px;font-family:'Liberation Sans', sans-serif;margin-right:0.00px;-webkit-text-stroke:0.12px #1f4510;transform:scaleX(1.2092);transform-origin:100% 0;">1.2M</div>
<svg class="b" style="left:397.30px;top:627.30px;width:3.60px;height:4.40px;" viewBox="0 0 6 7" preserveAspectRatio="none"><path d="M1.9 7 V0.7 H3.7 Q5.5 0.7 5.5 2.4 Q5.5 4.1 3.7 4.1 H0.3 M0.3 5.6 H4" fill="none" stroke="#5a8a48" stroke-width="1.5"/></svg>
<div class="b" style="left:164.60px;top:638.00px;width:236.30px;height:1.00px;background:#eaedf1;"></div>
<div class="t" id="t63" style="left:164.60px;top:648.88px;font-size:6.40px;font-weight:400;color:#2d3748;letter-spacing:0.00px;font-family:'Liberation Sans', sans-serif;-webkit-text-stroke:0.10px #2d3748;transform:scaleX(1.0452);transform-origin:0 0;">ООО "СтройМатериалы"</div>
<div class="t" id="t64" style="right:605.00px;top:648.94px;font-size:6.10px;font-weight:700;color:#1f4510;letter-spacing:0.00px;font-family:'Liberation Sans', sans-serif;margin-right:0.00px;-webkit-text-stroke:0.12px #1f4510;transform:scaleX(1.3376);transform-origin:100% 0;">950K</div>
<svg class="b" style="left:397.30px;top:649.40px;width:3.60px;height:4.40px;" viewBox="0 0 6 7" preserveAspectRatio="none"><path d="M1.9 7 V0.7 H3.7 Q5.5 0.7 5.5 2.4 Q5.5 4.1 3.7 4.1 H0.3 M0.3 5.6 H4" fill="none" stroke="#5a8a48" stroke-width="1.5"/></svg>
<div class="b" style="left:435.00px;top:561.20px;width:6.00px;height:3.90px;border-radius:50%;border:1.2px solid #7cae4a;"></div>
<div class="t" id="t65" style="left:446.90px;top:560.24px;font-size:6.10px;font-weight:400;color:#2d3748;letter-spacing:0.00px;font-family:'Liberation Sans', sans-serif;-webkit-text-stroke:0.10px #2d3748;transform:scaleX(1.1058);transform-origin:0 0;">Надо связаться</div>
<div class="t" id="t66" style="right:329.20px;top:560.24px;font-size:6.10px;font-weight:700;color:#1f4510;letter-spacing:0.00px;font-family:'Liberation Sans', sans-serif;margin-right:0.00px;-webkit-text-stroke:0.12px #1f4510;transform:scaleX(1.2682);transform-origin:100% 0;">45</div>
<div class="b" style="left:435.00px;top:581.00px;width:6.00px;height:3.90px;border-radius:50%;border:1.2px solid #3f4b5c;"></div>
<div class="t" id="t67" style="left:446.90px;top:580.04px;font-size:6.10px;font-weight:400;color:#2d3748;letter-spacing:0.00px;font-family:'Liberation Sans', sans-serif;-webkit-text-stroke:0.10px #2d3748;transform:scaleX(1.0981);transform-origin:0 0;">Обсуждение</div>
<div class="t" id="t68" style="right:329.20px;top:580.04px;font-size:6.10px;font-weight:700;color:#1f4510;letter-spacing:0.00px;font-family:'Liberation Sans', sans-serif;margin-right:0.00px;-webkit-text-stroke:0.12px #1f4510;transform:scaleX(1.2682);transform-origin:100% 0;">32</div>
<div class="b" style="left:435.00px;top:601.10px;width:6.00px;height:3.90px;border-radius:50%;border:1.2px solid #4d7c33;"></div>
<div class="t" id="t69" style="left:446.90px;top:600.14px;font-size:6.10px;font-weight:400;color:#2d3748;letter-spacing:0.00px;font-family:'Liberation Sans', sans-serif;-webkit-text-stroke:0.10px #2d3748;transform:scaleX(1.0810);transform-origin:0 0;">Заявка</div>
<div class="t" id="t70" style="right:329.20px;top:600.14px;font-size:6.10px;font-weight:700;color:#1f4510;letter-spacing:0.00px;font-family:'Liberation Sans', sans-serif;margin-right:0.00px;-webkit-text-stroke:0.12px #1f4510;transform:scaleX(1.2682);transform-origin:100% 0;">28</div>
<div class="b" style="left:435.00px;top:621.20px;width:6.00px;height:3.90px;border-radius:50%;border:1.2px solid #3f4b5c;"></div>
<div class="t" id="t71" style="left:446.90px;top:620.24px;font-size:6.10px;font-weight:400;color:#2d3748;letter-spacing:0.00px;font-family:'Liberation Sans', sans-serif;-webkit-text-stroke:0.10px #2d3748;transform:scaleX(1.1297);transform-origin:0 0;">Договор</div>
<div class="t" id="t72" style="right:329.20px;top:620.24px;font-size:6.10px;font-weight:700;color:#1f4510;letter-spacing:0.00px;font-family:'Liberation Sans', sans-serif;margin-right:0.00px;-webkit-text-stroke:0.12px #1f4510;transform:scaleX(1.2682);transform-origin:100% 0;">15</div>
<div class="b" style="left:435.00px;top:641.00px;width:6.00px;height:3.90px;border-radius:50%;border:1.2px solid #3f7a2e;"></div>
<div class="t" id="t73" style="left:446.90px;top:640.04px;font-size:6.10px;font-weight:400;color:#2d3748;letter-spacing:0.00px;font-family:'Liberation Sans', sans-serif;-webkit-text-stroke:0.10px #2d3748;transform:scaleX(1.0916);transform-origin:0 0;">Завершено</div>
<div class="t" id="t74" style="right:329.20px;top:640.04px;font-size:6.10px;font-weight:700;color:#1f4510;letter-spacing:0.00px;font-family:'Liberation Sans', sans-serif;margin-right:0.00px;-webkit-text-stroke:0.12px #1f4510;transform:scaleX(1.2682);transform-origin:100% 0;">67</div>
<div class="t" id="t75" style="left:705.80px;top:561.44px;font-size:6.10px;font-weight:400;color:#4a5568;letter-spacing:0.00px;font-family:'Liberation Sans', sans-serif;-webkit-text-stroke:0.10px #4a5568;transform:scaleX(1.1135);transform-origin:0 0;">Ожидаемая выручка:</div>
<div class="t" id="t76" style="right:64.70px;top:561.53px;font-size:6.70px;font-weight:700;color:#1f4510;letter-spacing:0.00px;font-family:'Liberation Sans', sans-serif;margin-right:0.00px;-webkit-text-stroke:0.13px #1f4510;transform:scaleX(1.2800);transform-origin:100% 0;">18.5M</div>
<svg class="b" style="left:938.40px;top:562.60px;width:3.60px;height:4.40px;" viewBox="0 0 6 7" preserveAspectRatio="none"><path d="M1.9 7 V0.7 H3.7 Q5.5 0.7 5.5 2.4 Q5.5 4.1 3.7 4.1 H0.3 M0.3 5.6 H4" fill="none" stroke="#5a8a48" stroke-width="1.5"/></svg>
<div class="b" style="left:705.80px;top:573.20px;width:236.20px;height:1.00px;background:#eaedf1;"></div>
<div class="t" id="t77" style="left:705.80px;top:585.94px;font-size:6.10px;font-weight:400;color:#4a5568;letter-spacing:0.00px;font-family:'Liberation Sans', sans-serif;-webkit-text-stroke:0.10px #4a5568;transform:scaleX(1.1230);transform-origin:0 0;">Новых клиентов:</div>
<div class="t" id="t78" style="right:58.10px;top:586.03px;font-size:6.70px;font-weight:700;color:#1f4510;letter-spacing:0.00px;font-family:'Liberation Sans', sans-serif;margin-right:0.00px;-webkit-text-stroke:0.13px #1f4510;transform:scaleX(1.3069);transform-origin:100% 0;">156</div>
<div class="b" style="left:705.80px;top:597.70px;width:236.20px;height:1.00px;background:#eaedf1;"></div>
<div class="t" id="t79" style="left:705.80px;top:610.54px;font-size:6.10px;font-weight:400;color:#4a5568;letter-spacing:0.00px;font-family:'Liberation Sans', sans-serif;-webkit-text-stroke:0.10px #4a5568;transform:scaleX(1.1073);transform-origin:0 0;">Завершенных сделок:</div>
<div class="t" id="t80" style="right:58.10px;top:610.63px;font-size:6.70px;font-weight:700;color:#1f4510;letter-spacing:0.00px;font-family:'Liberation Sans', sans-serif;margin-right:0.00px;-webkit-text-stroke:0.13px #1f4510;transform:scaleX(1.3417);transform-origin:100% 0;">42</div>
</body></html>
